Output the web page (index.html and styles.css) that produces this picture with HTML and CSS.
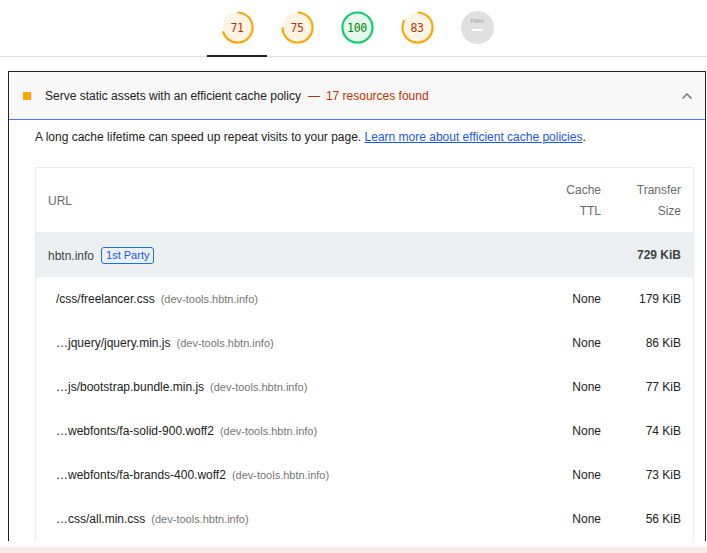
FILE: index.html
```html
<!DOCTYPE html>
<html lang="en">
<head>
<meta charset="utf-8">
<title>Lighthouse report</title>
<link rel="stylesheet" href="styles.css">
</head>
<body>
<nav class="gauges">
  <a class="gauge-tab active">
    <span class="gauge avg">
      <svg viewBox="0 0 34 34" class="ring"><circle cx="17" cy="17" r="15.5" class="fill"/><circle cx="17" cy="17" r="15.5" class="arc" pathLength="100" stroke-dasharray="71 100" transform="rotate(-90 17 17)"/></svg>
      <span class="num">71</span>
    </span>
  </a>
  <a class="gauge-tab">
    <span class="gauge avg">
      <svg viewBox="0 0 34 34" class="ring"><circle cx="17" cy="17" r="15.5" class="fill"/><circle cx="17" cy="17" r="15.5" class="arc" pathLength="100" stroke-dasharray="75 100" transform="rotate(-90 17 17)"/></svg>
      <span class="num">75</span>
    </span>
  </a>
  <a class="gauge-tab">
    <span class="gauge pass">
      <svg viewBox="0 0 34 34" class="ring"><circle cx="17" cy="17" r="15.5" class="fill"/><circle cx="17" cy="17" r="15.5" class="arc" pathLength="100" stroke-dasharray="100 100" transform="rotate(-90 17 17)"/></svg>
      <span class="num">100</span>
    </span>
  </a>
  <a class="gauge-tab">
    <span class="gauge avg">
      <svg viewBox="0 0 34 34" class="ring"><circle cx="17" cy="17" r="15.5" class="fill"/><circle cx="17" cy="17" r="15.5" class="arc" pathLength="100" stroke-dasharray="83 100" transform="rotate(-90 17 17)"/></svg>
      <span class="num">83</span>
    </span>
  </a>
  <a class="gauge-tab">
    <span class="gauge pwa">
      <span class="pwa-label">PWA</span>
      <span class="pwa-dash"></span>
    </span>
  </a>
</nav>

<section class="audit">
  <header class="audit-head">
    <span class="marker"></span>
    <span class="audit-title">Serve static assets with an efficient cache policy</span>
    <span class="audit-sep">—</span>
    <span class="audit-value">17 resources found</span>
    <svg class="chevron" viewBox="0 0 12 8"><path d="M1.5 6.5 L6 2 L10.5 6.5" /></svg>
  </header>
  <div class="audit-body">
    <p class="desc">A long cache lifetime can speed up repeat visits to your page. <a class="link" href="#">Learn more about efficient cache policies</a>.</p>
    <table class="details">
      <thead>
        <tr>
          <th class="col-url">URL</th>
          <th class="col-ttl">Cache<br>TTL</th>
          <th class="col-size">Transfer<br>Size</th>
        </tr>
      </thead>
      <tbody>
        <tr class="group">
          <td class="col-url"><span class="entity">hbtn.info</span><span class="badge">1st Party</span></td>
          <td class="col-ttl"></td>
          <td class="col-size strong">729 KiB</td>
        </tr>
        <tr>
          <td class="col-url sub"><span class="path">/css/freelancer.css</span><span class="host">(dev-tools.hbtn.info)</span></td>
          <td class="col-ttl">None</td>
          <td class="col-size">179 KiB</td>
        </tr>
        <tr>
          <td class="col-url sub"><span class="path">…jquery/jquery.min.js</span><span class="host">(dev-tools.hbtn.info)</span></td>
          <td class="col-ttl">None</td>
          <td class="col-size">86 KiB</td>
        </tr>
        <tr>
          <td class="col-url sub"><span class="path">…js/bootstrap.bundle.min.js</span><span class="host">(dev-tools.hbtn.info)</span></td>
          <td class="col-ttl">None</td>
          <td class="col-size">77 KiB</td>
        </tr>
        <tr>
          <td class="col-url sub"><span class="path">…webfonts/fa-solid-900.woff2</span><span class="host">(dev-tools.hbtn.info)</span></td>
          <td class="col-ttl">None</td>
          <td class="col-size">74 KiB</td>
        </tr>
        <tr>
          <td class="col-url sub"><span class="path">…webfonts/fa-brands-400.woff2</span><span class="host">(dev-tools.hbtn.info)</span></td>
          <td class="col-ttl">None</td>
          <td class="col-size">73 KiB</td>
        </tr>
        <tr>
          <td class="col-url sub"><span class="path">…css/all.min.css</span><span class="host">(dev-tools.hbtn.info)</span></td>
          <td class="col-ttl">None</td>
          <td class="col-size">56 KiB</td>
        </tr>
      </tbody>
    </table>
  </div>
</section>
<div class="next-band"></div>
</body>
</html>
```
FILE: styles.css
```css
html, body {
  margin: 0;
  padding: 0;
  background: #fff;
  font-family: "Liberation Sans", Arial, sans-serif;
  font-size: 12px;
  color: #212121;
  overflow: hidden;
}

.gauges {
  display: flex;
  padding-left: 207px;
  height: 56px;
  border-bottom: 1px solid #e0e0e0;
}

.gauge-tab {
  width: 60px;
  height: 57px;
  margin-bottom: -1px;
  box-sizing: border-box;
  display: flex;
  justify-content: center;
  padding-top: 11px;
}

.gauge-tab.active {
  border-bottom: 2px solid #202124;
}

.gauge {
  position: relative;
  width: 33px;
  height: 33px;
  display: flex;
  align-items: center;
  justify-content: center;
}

.ring {
  position: absolute;
  inset: 0;
  width: 33px;
  height: 33px;
}

.ring circle {
  stroke-width: 2.2;
}

.ring .fill {
  stroke: none;
}

.ring .arc {
  fill: none;
  stroke-linecap: butt;
}

.avg .fill { fill: #fff4e6; }
.avg .arc { stroke: #ffa400; }
.avg .num { color: #c33300; }

.pass .fill { fill: #e5f9ed; }
.pass .arc { stroke: #0cce6b; }
.pass .num { color: #008800; }

.num {
  position: relative;
  font-family: "DejaVu Sans Mono", "Liberation Mono", monospace;
  font-size: 11.5px;
  letter-spacing: -0.3px;
}

.pwa {
  background: #e0e0e0;
  border-radius: 50%;
  flex-direction: column;
  justify-content: flex-start;
  padding-top: 7px;
  box-sizing: border-box;
}

.pwa-label {
  font-size: 6px;
  color: #9e9e9e;
  line-height: 6px;
}

.pwa-dash {
  width: 11px;
  height: 2px;
  background: #fff;
  margin-top: 5px;
}

.audit {
  margin: 14px 0 0 8px;
  width: 698px;
  box-sizing: border-box;
  border: 1px solid #202124;
  border-bottom: none;
}

.audit-head {
  display: flex;
  align-items: center;
  height: 47px;
  background: #f8f8f8;
  border-bottom: 1px solid #3d7fe6;
  padding-left: 14px;
  padding-right: 12px;
}

.marker {
  width: 8px;
  height: 8px;
  background: #ffa400;
  margin-right: 14px;
  flex: none;
}

.audit-title {
  color: #212121;
  font-size: 12px;
}

.audit-sep {
  color: #c33300;
  margin: 0 6px 0 7px;
}

.audit-value {
  color: #c33300;
}

.chevron {
  margin-left: auto;
  width: 12px;
  height: 8px;
  fill: none;
  stroke: #757575;
  stroke-width: 1.5;
}

.audit-body {
  padding: 9px 11px 0 26px;
}

.desc {
  margin: 0 0 22px;
  line-height: 16px;
  color: #212121;
}

.link {
  color: #1a56f0;
  text-decoration: underline;
}

.details {
  width: 100%;
  border-collapse: collapse;
  border: 1px solid #ebebeb;
  border-bottom: none;
}

.details th {
  font-weight: normal;
  color: #6b6b6b;
  height: 62px;
  line-height: 21px;
  padding: 2px 12px 0;
  border-bottom: 1px solid #ebebeb;
}

.details td {
  height: 44px;
  padding: 0 12px;
  white-space: nowrap;
}

.col-url {
  text-align: left;
}

.col-ttl {
  text-align: right;
  width: 46px;
}

.col-size {
  text-align: right;
  width: 56px;
}

.group td {
  background: #edf0f3;
  color: #424242;
}

.entity {
  color: #424242;
}

.badge {
  display: inline-block;
  margin-left: 7px;
  border: 1px solid #1a6ef0;
  border-radius: 3px;
  color: #1a56f0;
  font-size: 11px;
  line-height: 15px;
  padding: 0 4px;
  vertical-align: 1px;
}

.strong {
  font-weight: bold;
}

.details td.sub {
  padding-left: 20px;
}

.path {
  color: #212121;
}

.host {
  color: #757575;
  font-size: 11px;
  margin-left: 6px;
}

.next-band {
  position: fixed;
  left: 0;
  right: 0;
  bottom: 0;
  height: 6px;
  background: #fbe9e7;
}
```
